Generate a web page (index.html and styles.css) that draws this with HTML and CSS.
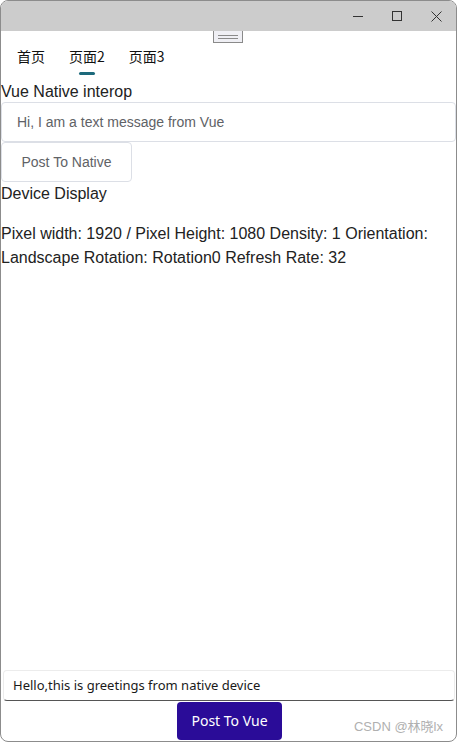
FILE: index.html
```html
<!DOCTYPE html>
<html>
<head>
<meta charset="utf-8">
<link rel="stylesheet" href="styles.css">
</head>
<body>
<div class="window">
  <div class="titlebar">
    <svg class="ctl" width="10" height="10" viewBox="0 0 10 10"><path d="M0 5.5H10" stroke="#333" stroke-width="1"/></svg>
    <svg class="ctl" width="10" height="10" viewBox="0 0 10 10"><rect x="0.5" y="0.5" width="9" height="9" fill="none" stroke="#333" stroke-width="1"/></svg>
    <svg class="ctl" width="11" height="11" viewBox="0 0 11 11"><path d="M0.5 0.5L10.5 10.5M10.5 0.5L0.5 10.5" stroke="#333" stroke-width="1"/></svg>
  </div>
  <div class="handle-row"><div class="handle"><span></span><span></span></div></div>
  <div class="tabs">
    <div class="tab">首页</div>
    <div class="tab active">页面2</div>
    <div class="tab">页面3</div>
  </div>
  <div class="content">
    <div class="heading">Vue Native interop</div>
    <div class="input">Hi, I am a text message from Vue</div>
    <div class="btn">Post To Native</div>
    <div class="heading">Device Display</div>
    <p class="info">Pixel width: 1920 / Pixel Height: 1080 Density: 1 Orientation: Landscape Rotation: Rotation0 Refresh Rate: 32</p>
  </div>
  <div class="native">
    <div class="native-input">Hello,this is greetings from native device</div>
    <div class="native-row">
      <div class="native-btn">Post To Vue</div>
      <div class="mark">CSDN @林晓lx</div>
    </div>
  </div>
</div>
</body>
</html>
```
FILE: styles.css
```css
html, body {
  margin: 0;
  padding: 0;
  background: #ffffff;
}
.window {
  width: 457px;
  height: 742px;
  box-sizing: border-box;
  border: 1px solid #8c8c8c;
  border-radius: 8px;
  overflow: hidden;
  display: flex;
  flex-direction: column;
  background: #fff;
  font-family: "Liberation Sans", Arial, sans-serif;
  position: relative;
}
.titlebar {
  height: 30px;
  background: #cccccc;
  display: flex;
  justify-content: flex-end;
  align-items: center;
  gap: 29px;
  padding-right: 14px;
  flex-shrink: 0;
}
.handle-row {
  height: 13px;
  display: flex;
  justify-content: center;
  flex-shrink: 0;
}
.handle {
  width: 28px;
  height: 11px;
  margin-left: -2px;
  border: 1px solid #8a8a8a;
  border-top: none;
  background: #efeff4;
  display: flex;
  flex-direction: column;
  justify-content: center;
  align-items: center;
  gap: 2px;
}
.handle span {
  display: block;
  width: 20px;
  height: 1px;
  background: #8a8a8a;
}
.tabs {
  display: flex;
  padding-left: 16px;
  gap: 24px;
  height: 38px;
  flex-shrink: 0;
  font-family: "Noto Sans CJK SC", sans-serif;
  font-size: 14px;
  color: #111;
}
.tab {
  position: relative;
  padding-top: 3px;
  line-height: 18px;
}
.tab.active::after {
  content: "";
  position: absolute;
  left: 50%;
  margin-left: -8px;
  top: 28px;
  width: 16px;
  height: 3px;
  border-radius: 2px;
  background: #1d6a7c;
}
.content {
  flex: 1;
  display: flex;
  flex-direction: column;
  align-items: flex-start;
  color: #222;
}
.heading {
  font-size: 16px;
  line-height: 20px;
}
.input {
  align-self: stretch;
  height: 38px;
  border: 1px solid #dcdfe6;
  border-radius: 4px;
  font-size: 14px;
  color: #606266;
  line-height: 38px;
  padding-left: 15px;
}
.btn {
  width: 129px;
  height: 38px;
  border: 1px solid #dcdfe6;
  border-radius: 4px;
  font-size: 14px;
  color: #606266;
  line-height: 38px;
  text-align: center;
  margin-bottom: 2px;
}
.info {
  margin: 18px 0 0 0;
  font-size: 16px;
  line-height: 24px;
  color: #222;
}
.native {
  flex-shrink: 0;
  padding: 0 1px 1px 2px;
}
.native-input {
  height: 29px;
  border: 1px solid #ececec;
  border-bottom: 1px solid #555;
  border-radius: 4px;
  font-family: "Noto Sans", "Open Sans", sans-serif;
  font-size: 13px;
  color: #1a1a1a;
  line-height: 29px;
  padding-left: 9px;
}
.native-row {
  display: flex;
  justify-content: center;
  position: relative;
  padding-top: 1px;
}
.native-btn {
  width: 105px;
  height: 38px;
  margin-left: 1px;
  background: #2a0c98;
  color: #fff;
  border-radius: 4px;
  font-family: "Noto Sans", "Open Sans", sans-serif;
  font-size: 14px;
  line-height: 38px;
  text-align: center;
}
.mark {
  position: absolute;
  right: 12px;
  top: 15px;
  font-family: "Liberation Sans", "Noto Sans CJK SC", sans-serif;
  font-size: 13px;
  color: #b0b0b0;
}
```
